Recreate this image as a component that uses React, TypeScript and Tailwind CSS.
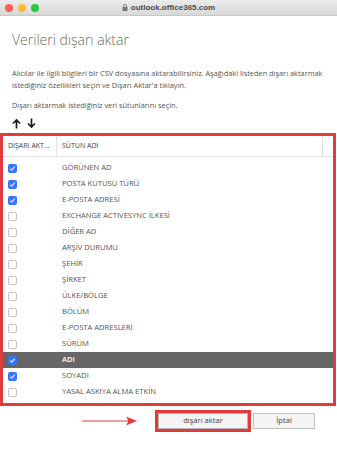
import React from "react";

const rows: { label: string; checked: boolean; selected?: boolean }[] = [
  { label: "GÖRÜNEN AD", checked: true },
  { label: "POSTA KUTUSU TÜRÜ", checked: true },
  { label: "E-POSTA ADRESİ", checked: true },
  { label: "EXCHANGE ACTIVESYNC İLKESİ", checked: false },
  { label: "DİĞER AD", checked: false },
  { label: "ARŞİV DURUMU", checked: false },
  { label: "ŞEHİR", checked: false },
  { label: "ŞİRKET", checked: false },
  { label: "ÜLKE/BÖLGE", checked: false },
  { label: "BÖLÜM", checked: false },
  { label: "E-POSTA ADRESLERİ", checked: false },
  { label: "SÜRÜM", checked: false },
  { label: "ADI", checked: true, selected: true },
  { label: "SOYADI", checked: true },
  { label: "YASAL ASKIYA ALMA ETKİN", checked: false },
  { label: "OFİS", checked: false },
];

function Box({ checked }: { checked: boolean }) {
  if (checked) {
    return (
      <div className="w-[9px] h-[9px] rounded-[2px] bg-[#3478f6] flex items-center justify-center">
        <svg width="7" height="7" viewBox="0 0 8 8">
          <path d="M1.5 4.2 L3.2 5.8 L6.5 2" stroke="white" strokeWidth="1.2" fill="none" />
        </svg>
      </div>
    );
  }
  return <div className="w-[9px] h-[9px] rounded-[2px] border border-[#c4c4c4] bg-white" />;
}

export default function App() {
  return (
    <div className="w-[337px] h-[454px] bg-white overflow-hidden relative" style={{ fontFamily: '"Open Sans", "Noto Sans", sans-serif' }}>
      {/* title bar */}
      <div className="h-[16px] bg-gradient-to-b from-[#ececec] to-[#d8d8d8] border-b border-[#c8c8c8] flex items-center relative">
        <div className="flex gap-[5px] pl-[5px]">
          <div className="w-[8px] h-[8px] rounded-full bg-[#fe5f57]" />
          <div className="w-[8px] h-[8px] rounded-full bg-[#febc2e]" />
          <div className="w-[8px] h-[8px] rounded-full bg-[#28c840]" />
        </div>
        <div className="absolute inset-0 flex items-center justify-center gap-[3px] text-[8px] text-[#4a4a4a] font-semibold" style={{ fontFamily: '"Liberation Sans", Arial, sans-serif' }}>
          <svg width="6" height="7" viewBox="0 0 6 7">
            <rect x="0.5" y="3" width="5" height="4" rx="0.5" fill="#777" />
            <path d="M1.5 3 V2 a1.5 1.5 0 0 1 3 0 V3" stroke="#777" strokeWidth="0.9" fill="none" />
          </svg>
          <span>outlook.office365.com</span>
        </div>
      </div>

      <div className="px-[12px]">
        <div className="mt-[15px] text-[14px] font-light text-[#6a6a6a] leading-[18px]">Verileri dışarı aktar</div>
        <div className="mt-[18px] text-[7.4px] text-[#555] leading-[12px]">
          Alıcılar ile ilgili bilgileri bir CSV dosyasına aktarabilirsiniz. Aşağıdaki listeden dışarı aktarmak istediğiniz özellikleri seçin ve Dışarı Aktar'a tıklayın.
        </div>
        <div className="mt-[8px] text-[7.4px] text-[#555] leading-[12px]">Dışarı aktarmak istediğiniz veri sütunlarını seçin.</div>
        <div className="mt-[5px] flex gap-[6px] items-center h-[14px]">
          <svg width="9" height="11" viewBox="0 0 9 11">
            <path d="M4.5 10.5 V2 M1 5.5 L4.5 2 L8 5.5" stroke="#1a1a1a" strokeWidth="1.7" fill="none" />
          </svg>
          <svg width="9" height="11" viewBox="0 0 9 11">
            <path d="M4.5 0.5 V9 M1 5.5 L4.5 9 L8 5.5" stroke="#1a1a1a" strokeWidth="1.7" fill="none" />
          </svg>
        </div>
      </div>

      {/* table in red box */}
      <div className="mt-[3px] w-[336px] h-[273px] border-[3px] border-[#e03c3c] overflow-hidden">
        <div className="flex h-[21px] border-b border-[#e2e2e2] text-[7px] text-[#444] items-center">
          <div className="w-[54px] pl-[5px] h-full flex items-center border-r border-[#e2e2e2] whitespace-nowrap">DIŞARI AKT...</div>
          <div className="flex-1 pl-[5px] h-full flex items-center border-r border-[#e2e2e2]">SÜTUN ADI</div>
          <div className="w-[10px]" />
        </div>
        <div className="pt-[3px]">
          {rows.map((r) => (
            <div
              key={r.label}
              className={`flex items-center h-[16px] text-[7.6px] ${r.selected ? "bg-[#666666] text-white font-semibold" : "text-[#555]"}`}
            >
              <div className="w-[54px] pl-[5px] flex items-center">
                <Box checked={r.checked} />
              </div>
              <div className="pl-[5px] whitespace-nowrap">{r.label}</div>
            </div>
          ))}
        </div>
      </div>

      {/* buttons */}
      <div className="flex items-center mt-[4px] h-[21px]">
        <svg width="60" height="12" viewBox="0 0 60 12" className="ml-[82px]">
          <path d="M0 6 H48" stroke="#e03c3c" strokeWidth="1.2" />
          <path d="M44 1.5 L55 6 L44 10.5 L46.5 6 Z" fill="#e03c3c" />
        </svg>
        <div className="ml-[13px] border-[3px] border-[#e03c3c] p-0">
          <div className="w-[90px] h-[16px] bg-[#f4f4f4] border border-[#b5b5b5] flex items-center justify-center text-[7.6px] text-[#444]">dışarı aktar</div>
        </div>
        <div className="ml-[2px] w-[62px] h-[16px] bg-[#f4f4f4] border border-[#c0c0c0] flex items-center justify-center text-[7.6px] text-[#444]">İptal</div>
      </div>
    </div>
  );
}
